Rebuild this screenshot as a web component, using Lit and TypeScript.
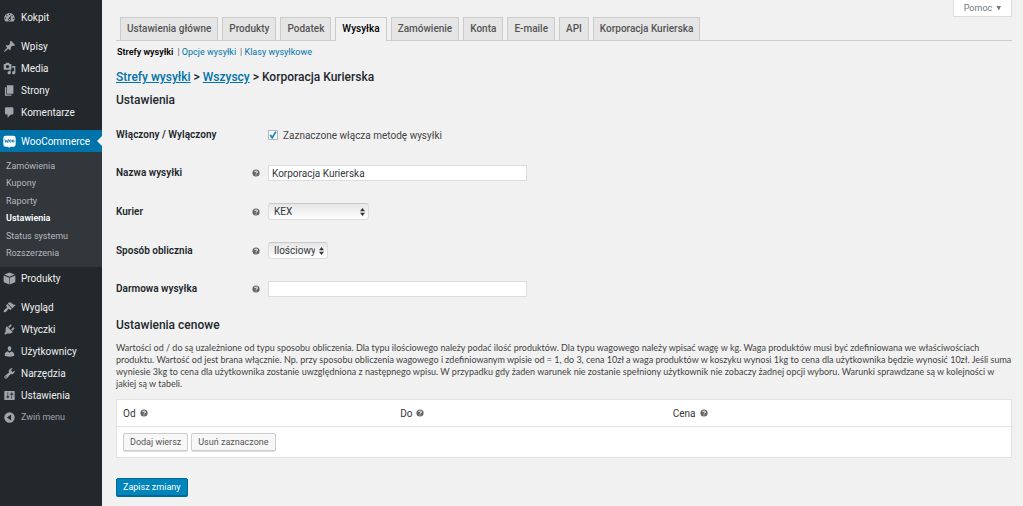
import { LitElement, html, css, svg, nothing } from "lit";
import { customElement, property } from "lit/decorators.js";

const paths: Record<string, string> = {
  dashboard: "M3.76 16h12.48c1.1-1.37 1.76-3.11 1.76-5 0-4.42-3.58-8-8-8s-8 3.58-8 8c0 1.89.66 3.63 1.76 5zM10 4c.55 0 1 .45 1 1s-.45 1-1 1-1-.45-1-1 .45-1 1-1zM6 6c.55 0 1 .45 1 1s-.45 1-1 1-1-.45-1-1 .45-1 1-1zm8 0c.55 0 1 .45 1 1s-.45 1-1 1-1-.45-1-1 .45-1 1-1zm-5.37 5.55L12 7v6c0 1.1-.9 2-2 2s-2-.9-2-2c0-.57.24-1.08.63-1.45zM4 10c.55 0 1 .45 1 1s-.45 1-1 1-1-.45-1-1 .45-1 1-1zm12 0c.55 0 1 .45 1 1s-.45 1-1 1-1-.45-1-1 .45-1 1-1zm-5 3c0-.55-.45-1-1-1s-1 .45-1 1 .45 1 1 1 1-.45 1-1z",
  post: "M10.44 3.02l1.82-1.82 6.36 6.35-1.83 1.82c-1.05-.68-2.48-.57-3.41.36l-.75.75c-.92.93-1.04 2.35-.35 3.41l-1.83 1.82-2.41-2.41-2.8 2.79c-.42.42-3.38 2.71-3.8 2.29s1.86-3.39 2.28-3.81l2.79-2.79L4.1 9.36l1.83-1.82c1.05.69 2.48.57 3.4-.36l.75-.75c.93-.92 1.05-2.35.36-3.41z",
  media: "M13 11V4c0-.55-.45-1-1-1h-1.67L9 1H5L3.67 3H2c-.55 0-1 .45-1 1v7c0 .55.45 1 1 1h10c.55 0 1-.45 1-1zM7 4.5c1.38 0 2.5 1.12 2.5 2.5S8.38 9.5 7 9.5 4.5 8.38 4.5 7 5.62 4.5 7 4.5zM14 6h5v10.5c0 1.38-1.12 2.5-2.5 2.5S14 17.88 14 16.5s1.12-2.5 2.5-2.5c.17 0 .34.02.5.05V9h-3V6zm-4 8.05V13h2v3.5c0 1.38-1.12 2.5-2.5 2.5S7 17.88 7 16.5 8.12 14 9.5 14c.17 0 .34.02.5.05z",
  page: "M6 15V2h10v13H6zm-1 1h8v2H3V5h2v11z",
  comments: "M5 2h9c1.1 0 2 .9 2 2v7c0 1.1-.9 2-2 2h-2l-5 5v-5H5c-1.1 0-2-.9-2-2V4c0-1.1.9-2 2-2z",
  product: "M10 .8L18 4 10 7.400 2 4zM1 5.200l8.600 3.500v10.500L2.200 16C1.400 15.600 1 15.200 1 14.200zM19 5.200l-8.600 3.500v10.500l7.400-3.200c.8-.4 1.200-.8 1.200-1.800z",
  appearance: "M14.48 11.06L7.41 3.99l1.5-1.5c.5-.56 2.3-.47 3.51.32 1.21.8 1.43 1.28 2.91 2.1 1.18.64 2.45 1.26 4.45.85zm-.71.71L6.7 4.7 4.93 6.47c-.39.39-.39 1.02 0 1.41l1.06 1.06c.39.39.39 1.03 0 1.42-.6.6-1.43 1.11-2.21 1.69-.35.26-.7.53-1.01.84C1.43 14.23.4 16.08 1.4 17.07c.99 1 2.84-.03 4.18-1.36.31-.31.58-.66.85-1.02.57-.78 1.08-1.61 1.69-2.21.39-.39 1.02-.39 1.41 0l1.06 1.06c.39.39 1.02.39 1.41 0z",
  plugins: "M13.11 4.36L9.87 7.6 8 5.73l3.24-3.24c.35-.34 1.05-.2 1.56.32.52.51.66 1.21.31 1.55zm-8 1.77l.91-1.12 9.01 9.01-1.19.84c-.71.71-2.63 1.16-3.82 1.16H6.14L4.9 17.26c-.59.59-1.54.59-2.12 0-.59-.58-.59-1.53 0-2.12l1.24-1.24v-3.88c0-1.13.4-3.19 1.09-3.89zm7.26 3.97l3.24-3.24c.34-.35 1.04-.21 1.55.31.52.51.66 1.21.31 1.55l-3.24 3.25z",
  users: "M10 9.25c-2.27 0-2.73-3.44-2.73-3.44C7 4.02 7.82 2 9.97 2c2.16 0 2.98 2.02 2.71 3.81 0 0-.41 3.44-2.68 3.44zm0 2.57L12.72 10c2.39 0 4.52 2.33 4.52 4.53v2.49s-3.65 1.13-7.24 1.13c-3.65 0-7.24-1.13-7.24-1.13v-2.49c0-2.25 1.94-4.48 4.47-4.48z",
  tools: "M16.68 9.77c-1.34 1.34-3.3 1.67-4.95.99l-5.41 6.52c-.99.99-2.59.99-3.58 0s-.99-2.59 0-3.57l6.52-5.42c-.68-1.65-.35-3.61.99-4.95 1.28-1.28 3.12-1.62 4.72-1.06l-2.89 2.89 2.82 2.82 2.86-2.87c.53 1.58.18 3.39-1.08 4.65zM3.81 16.21c.4.39 1.04.39 1.43 0 .4-.4.4-1.04 0-1.43-.39-.4-1.03-.4-1.43 0-.39.39-.39 1.03 0 1.43z",
  settings: "M18 16V4c0-.55-.45-1-1-1H3c-.55 0-1 .45-1 1v12c0 .55.45 1 1 1h14c.55 0 1-.45 1-1zM8 11h1c.55 0 1 .45 1 1s-.45 1-1 1H8v1.5c0 .28-.22.5-.5.5s-.5-.22-.5-.5V13H6c-.55 0-1-.45-1-1s.45-1 1-1h1V5.5c0-.28.22-.5.5-.5s.5.22.5.5V11zm5-2h-1c-.55 0-1-.45-1-1s.45-1 1-1h1V5.5c0-.28.22-.5.5-.5s.5.22.5.5V7h1c.55 0 1 .45 1 1s-.45 1-1 1h-1v5.5c0 .28-.22.5-.5.5s-.5-.22-.5-.5V9z",
  collapse: "M10 2a8 8 0 1 0 0 16 8 8 0 0 0 0-16zM12.500 5.500v9L6 10z",
};

const wooIcon = svg`
  <path fill="#fff" d="M4 1h12a3.500 3.500 0 0 1 3.500 3.500v10A3.500 3.500 0 0 1 16 18h-5l-1.500 2L8 18H4a3.500 3.500 0 0 1-3.500-3.500v-10A3.500 3.500 0 0 1 4 1z"/>
  <path fill="none" stroke="#0073aa" stroke-width="1.300" stroke-linecap="round" stroke-linejoin="round"
    d="M3 7l1.200 4.500L6 8l1.300 3.500L8.500 7M10 9.300a1.300 2 0 1 0 2.600 0 1.300 2 0 1 0-2.600 0M14.300 9.300a1.300 2 0 1 0 2.600 0 1.300 2 0 1 0-2.600 0"/>`;

const helpTip = html`<svg class="help" viewBox="0 0 20 20" role="img" aria-label="Pomoc">
  <circle cx="10" cy="10" r="9" />
  <path d="M6.800 7.600C6.900 3.900 13.300 4 13.200 7.500 13.200 9.700 10 9.700 10 12" />
  <circle class="dot" cx="10" cy="14.900" r="1.400" />
</svg>`;

@customElement("admin-menu")
class AdminMenu extends LitElement {
  static styles = css`
    :host { display: block; background: #23282d; color: #eee; font-size: 10px; }
    .menu { display: flex; flex-direction: column; padding-top: 6px; }
    .item {
      display: flex; align-items: center; gap: 5px; height: 22px; padding: 0 0 0 3px;
      color: inherit; text-decoration: none; font: inherit; white-space: nowrap;
      background: none; border: 0; text-align: left; box-sizing: border-box;
    }
    .first { margin-top: 7px; }
    .icon { width: 13px; height: 13px; flex: none; fill: #a0a5aa; fill-rule: evenodd; }
    .current { background: #0073aa; color: #fff; }
    .current::after {
      content: ""; margin-left: auto; width: 5px; height: 10px;
      background: #f1f1f1; clip-path: polygon(100% 0, 0 50%, 100% 100%);
    }
    .menu .collapse { color: #a0a5aa; font-size: 9px; }
    .sub { display: grid; grid-auto-rows: 1fr; height: 105px; padding: 5px 6px; background: #32373c; font-size: 9px; }
    .sub a { display: flex; align-items: center; color: #b4b9be; text-decoration: none; }
    .sub .active { color: #fff; font-weight: 600; }
  `;

  private item(icon: string, label: string, extra = "") {
    return html`<a class="item ${extra}" href="#">
      <svg class="icon" viewBox="0 0 20 20" aria-hidden="true">
        ${icon === "woo" ? wooIcon : svg`<path d=${paths[icon]} />`}
      </svg>${label}</a>`;
  }

  render() {
    const sub = ["Zamówienia", "Kupony", "Raporty", "Ustawienia", "Status systemu", "Rozszerzenia"];
    return html`<nav class="menu">
      ${this.item("dashboard", "Kokpit")}
      ${this.item("post", "Wpisy", "first")}
      ${this.item("media", "Media")}
      ${this.item("page", "Strony")}
      ${this.item("comments", "Komentarze")}
      ${this.item("woo", "WooCommerce", "first current")}
      <div class="sub">
        ${sub.map((s) => html`<a href="#" class=${s === "Ustawienia" ? "active" : nothing}>${s}</a>`)}
      </div>
      ${this.item("product", "Produkty")}
      ${this.item("appearance", "Wygląd", "first")}
      ${this.item("plugins", "Wtyczki")}
      ${this.item("users", "Użytkownicy")}
      ${this.item("tools", "Narzędzia")}
      ${this.item("settings", "Ustawienia")}
      <button class="item collapse" type="button">
        <svg class="icon" viewBox="0 0 20 20" aria-hidden="true"><path d=${paths.collapse} /></svg>Zwiń menu
      </button>
    </nav>`;
  }
}

@customElement("shipping-settings")
class ShippingSettings extends LitElement {
  @property() method = "Korporacja Kurierska";

  static styles = css`
    :host { display: block; padding: 0 11px 10px 14px; color: #444; font-size: 9px; }
    a { color: #0073aa; }
    button, input, select { font: inherit; color: inherit; margin: 0; box-sizing: border-box; }
    .screen { display: flex; justify-content: flex-end; height: 17px; }
    .screen button {
      width: 59px; padding: 0; background: #fff; border: 1px solid #ddd; border-top: 0; color: #72777c;
      display: flex; align-items: center; justify-content: center; gap: 4px;
    }
    .caret { width: 5px; height: 5px; background: #72777c; clip-path: polygon(0 0, 100% 0, 50% 100%); }
    .tabs { display: flex; gap: 4px; padding-left: 4px; border-bottom: 1px solid #ccc; }
    .tabs a {
      padding: 0 6px; line-height: 22px; border: 1px solid #ccc; border-bottom: 0;
      background: #e5e5e5; color: #555; font-size: 10px; font-weight: 500; text-decoration: none; white-space: nowrap;
    }
    .tabs .active { background: #f1f1f1; color: #000; margin-bottom: -1px; padding-bottom: 1px; }
    .sections { display: flex; gap: 4px; padding-left: 1px; margin-top: 4px; line-height: 14px; color: #666; }
    .sections a { text-decoration: none; }
    .sections .active { color: #000; font-weight: 600; }
    h2 { margin: 0; font-size: 12px; line-height: 16px; font-weight: 500; color: #23282d; }
    .crumbs { margin-top: 10px; }
    .general { margin-top: 7px; }
    .form { margin-top: 8px; }
    .row { display: grid; grid-template-columns: 136px 16px 1fr; align-items: center; padding: 11px 0; }
    .name { font-size: 10px; line-height: 16px; font-weight: 600; color: #23282d; }
    .help { width: 8px; height: 8px; fill: #666; }
    .help path { fill: none; stroke: #f1f1f1; stroke-width: 2.600; }
    .help .dot { fill: #f1f1f1; }
    .check { grid-column: 3; display: flex; align-items: center; gap: 5px; height: 16px; font-size: 10px; }
    .check input {
      appearance: none; width: 10px; height: 10px; border: 1px solid #b4b9be; background: #fff;
      display: grid; place-items: center;
    }
    .check input:checked::before {
      content: ""; width: 8px; height: 8px; background: #1e8cbe;
      clip-path: polygon(6% 52%, 24% 42%, 40% 64%, 76% 4%, 96% 14%, 46% 98%, 34% 98%);
    }
    .text { width: 100%; max-width: 259px; height: 16px; padding: 0 3px; border: 1px solid #ddd; background: #fff; color: #32373c; font-size: 10px; }
    .pick { display: inline-grid; align-items: center; justify-self: start; }
    .pick select, .pick svg { grid-area: 1 / 1; }
    .pick select {
      appearance: none; height: 17px; padding: 0 12px 0 5px; border: 1px solid #ddd; border-top-color: #c8c8c8; border-radius: 3px;
      background: linear-gradient(#e6e6e6, #fff); color: #32373c; width: 100%; font-size: 10px;
    }
    .pick svg { width: 5px; height: 8px; justify-self: end; margin-right: 4px; pointer-events: none; }
    .wide { width: 101px; }
    .narrow { width: 60px; }
    .pricing { margin-top: 9px; }
    p { margin: 9px 0 0; line-height: 12px; font-family: Lato, Roboto, sans-serif; }
    table { width: 100%; margin-top: 9px; background: #fff; border: 1px solid #e1e1e1; border-spacing: 0; table-layout: fixed; }
    th, td { box-sizing: border-box; padding: 0 6px; text-align: left; font-weight: 400; }
    th { height: 26px; color: #32373c; font-size: 10px; }
    .from { width: 31%; }
    .to { width: 30.5%; }
    .head { display: flex; align-items: center; gap: 4px; }
    td { border-top: 1px solid #e1e1e1; height: 31px; }
    .actions { display: flex; gap: 3px; }
    .actions button {
      height: 18px; padding: 0 6px; border: 1px solid #ccc; border-radius: 2px; background: #f7f7f7; color: #555;
      box-shadow: 0 1px 0 #ddd;
    }
    .save {
      display: block; height: 18px; margin-top: 20px; padding: 0 6px; border: 1px solid #006799; border-radius: 2px;
      background: #0085ba; color: #fff; box-shadow: 0 1px 0 #006799;
    }
  `;

  private select(id: string, options: string[], size: string) {
    return html`<span class="pick ${size}">
      <select id=${id}>${options.map((o) => html`<option>${o}</option>`)}</select>
      <svg viewBox="0 0 5 8" aria-hidden="true"><path fill="#32373c" d="M0 3.200L2.500 0 5 3.200zM0 4.800L2.500 8 5 4.800z" /></svg>
    </span>`;
  }

  private row(id: string, label: string, control: unknown) {
    return html`<div class="row"><label class="name" for=${id}>${label}</label>${helpTip}${control}</div>`;
  }

  render() {
    const tabs = ["Ustawienia główne", "Produkty", "Podatek", "Wysyłka", "Zamówienie", "Konta", "E-maile", "API", "Korporacja Kurierska"];
    const columns = [["Od", "from"], ["Do", "to"], ["Cena", ""]];
    return html`
      <div class="screen"><button type="button">Pomoc <span class="caret"></span></button></div>
      <nav class="tabs">
        ${tabs.map((t) => html`<a href="#" class=${t === "Wysyłka" ? "active" : nothing}>${t}</a>`)}
      </nav>
      <nav class="sections">
        <a href="#" class="active">Strefy wysyłki</a>
        <span>| <a href="#">Opcje wysyłki</a></span>
        <span>| <a href="#">Klasy wysyłkowe</a></span>
      </nav>
      <h2 class="crumbs"><a href="#">Strefy wysyłki</a> &gt; <a href="#">Wszyscy</a> &gt; ${this.method}</h2>
      <h2 class="general">Ustawienia</h2>
      <div class="form">
        <div class="row">
          <label class="name" for="enabled">Włączony / Wylączony</label>
          <label class="check"><input id="enabled" type="checkbox" checked />Zaznaczone włącza metodę wysyłki</label>
        </div>
        ${this.row("title", "Nazwa wysyłki", html`<input class="text" id="title" type="text" .value=${this.method} />`)}
        ${this.row("courier", "Kurier", this.select("courier", ["KEX"], "wide"))}
        ${this.row("mode", "Sposób oblicznia", this.select("mode", ["Ilościowy"], "narrow"))}
        ${this.row("free", "Darmowa wysyłka", html`<input class="text" id="free" type="text" />`)}
      </div>
      <h2 class="pricing">Ustawienia cenowe</h2>
      <p>Wartości od / do są uzależnione od typu sposobu obliczenia. Dla typu ilościowego należy podać ilość produktów. Dla typu wagowego należy wpisać wagę w kg. Waga produktów musi być zdefiniowana we właściwościach produktu. Wartość od jest brana włącznie. Np. przy sposobu obliczenia wagowego i zdefiniowanym wpisie od = 1, do 3, cena 10zł a waga produktów w koszyku wynosi 1kg to cena dla użytkownika będzie wynosić 10zł. Jeśli suma wyniesie 3kg to cena dla użytkownika zostanie uwzględniona z następnego wpisu. W przypadku gdy żaden warunek nie zostanie spełniony użytkownik nie zobaczy żadnej opcji wyboru. Warunki sprawdzane są w kolejności w jakiej są w tabeli.</p>
      <table>
        <thead>
          <tr>${columns.map(([name, cls]) => html`<th class=${cls}><span class="head">${name} ${helpTip}</span></th>`)}</tr>
        </thead>
        <tbody>
          <tr><td colspan="3"><div class="actions">
            <button type="button">Dodaj wiersz</button>
            <button type="button">Usuń zaznaczone</button>
          </div></td></tr>
        </tbody>
      </table>
      <button class="save" type="button">Zapisz zmiany</button>
    `;
  }
}

@customElement("app-root")
class AppRoot extends LitElement {
  static styles = css`
    :host {
      display: grid; grid-template-columns: 102px minmax(0, 1fr); min-height: 100vh;
      background: #f1f1f1; font-family: Roboto, "Open Sans", sans-serif;
    }
  `;
  render() {
    return html`<admin-menu></admin-menu><shipping-settings></shipping-settings>`;
  }
}
